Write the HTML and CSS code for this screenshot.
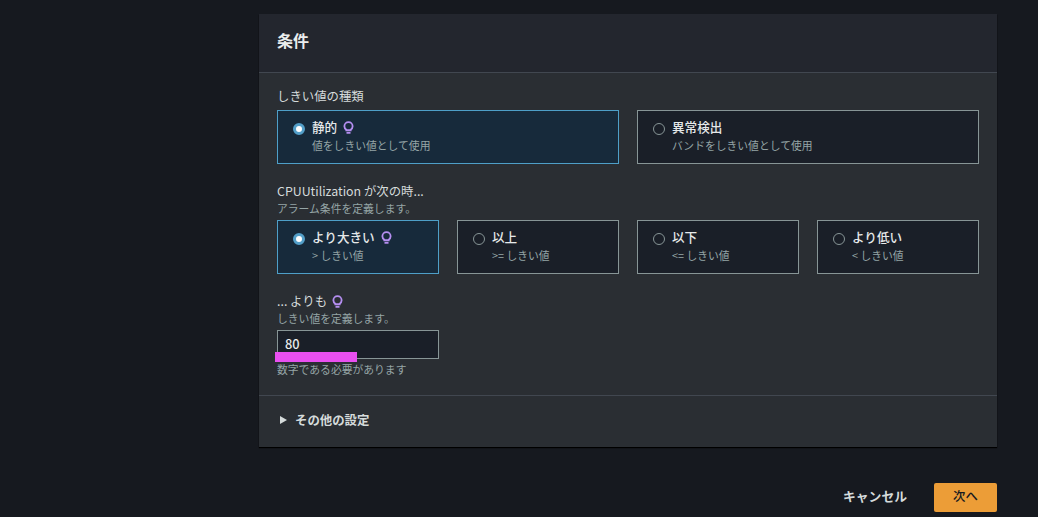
FILE: index.html
```html
<!DOCTYPE html>
<html lang="ja">
<head>
<meta charset="utf-8">
<title>条件</title>
<link rel="stylesheet" href="styles.css">
</head>
<body>
<main class="page">
  <section class="panel">
    <header class="panel-head"><h2>条件</h2></header>
    <div class="panel-body">
      <div class="field">
        <div class="label">しきい値の種類</div>
        <div class="tiles two">
          <div class="tile on"><span class="radio"></span><div class="tile-text"><div class="tile-title">静的 <svg class="bulb" viewBox="0 0 12 14"><path d="M3.6 9.4C2.3 8.5 1.5 7.2 1.5 5.7a4.5 4.5 0 0 1 9 0c0 1.500-.8 2.800-2.100 3.700v.6H3.600z" fill="none" stroke="currentColor" stroke-width="2"/><path d="M3.800 12.800h4.400" stroke="currentColor" stroke-width="2"/></svg></div><div class="tile-sub">値をしきい値として使用</div></div></div>
          <div class="tile"><span class="radio"></span><div class="tile-text"><div class="tile-title">異常検出</div><div class="tile-sub">バンドをしきい値として使用</div></div></div>
        </div>
      </div>
      <div class="field">
        <div class="label">CPUUtilization が次の時...</div>
        <div class="hint">アラーム条件を定義します。</div>
        <div class="tiles four">
          <div class="tile on"><span class="radio"></span><div class="tile-text"><div class="tile-title">より大きい <svg class="bulb" viewBox="0 0 12 14"><path d="M3.6 9.4C2.3 8.5 1.5 7.2 1.5 5.7a4.5 4.5 0 0 1 9 0c0 1.500-.8 2.800-2.100 3.700v.6H3.600z" fill="none" stroke="currentColor" stroke-width="2"/><path d="M3.800 12.800h4.400" stroke="currentColor" stroke-width="2"/></svg></div><div class="tile-sub">&gt; しきい値</div></div></div>
          <div class="tile"><span class="radio"></span><div class="tile-text"><div class="tile-title">以上</div><div class="tile-sub">&gt;= しきい値</div></div></div>
          <div class="tile"><span class="radio"></span><div class="tile-text"><div class="tile-title">以下</div><div class="tile-sub">&lt;= しきい値</div></div></div>
          <div class="tile"><span class="radio"></span><div class="tile-text"><div class="tile-title">より低い</div><div class="tile-sub">&lt; しきい値</div></div></div>
        </div>
      </div>
      <div class="field">
        <div class="label">... よりも <svg class="bulb" viewBox="0 0 12 14"><path d="M3.6 9.4C2.3 8.5 1.5 7.2 1.5 5.7a4.5 4.5 0 0 1 9 0c0 1.500-.8 2.800-2.100 3.700v.6H3.600z" fill="none" stroke="currentColor" stroke-width="2"/><path d="M3.800 12.800h4.400" stroke="currentColor" stroke-width="2"/></svg></div>
        <div class="hint">しきい値を定義します。</div>
        <div class="input-wrap">
          <div class="input">80</div>
          <span class="redact"></span>
        </div>
        <div class="constraint">数字である必要があります</div>
      </div>
    </div>
    <div class="extra"><span class="caret"></span>その他の設定</div>
  </section>
  <div class="actions">
    <span class="cancel">キャンセル</span>
    <span class="next">次へ</span>
  </div>
</main>
</body>
</html>
```
FILE: styles.css
```css
* { box-sizing: border-box; }
html, body { margin: 0; height: 100%; }
body {
  background: #16191f;
  color: #d5dbdb;
  font-family: "Noto Sans CJK JP", "Noto Sans", sans-serif;
  overflow: hidden;
}
.page { padding: 14px 41px 0 259px; }
.panel {
  background: #2a2e33;
  box-shadow: 0 1px 1px #000;
}
.panel-head {
  height: 59px;
  background: #23262e;
  border-bottom: 1px solid #414750;
  padding: 0 18px 7px;
  display: flex;
  align-items: center;
}
.panel-head h2 { margin: 0; font-size: 16px; font-weight: 700; line-height: 24px; color: #eaeded; }
.panel-body {
  padding: 14px 18px 0;
  height: 323px;
  border-bottom: 1px solid #414750;
}
.field { margin-bottom: 18px; }
.label { font-size: 12.4px; line-height: 19px; color: #d5dbdb; display: flex; align-items: center; gap: 5px; }
.hint { font-size: 10.800px; line-height: 14px; color: #95a5a6; }
.tiles { display: grid; }
.two { grid-template-columns: 342px 342px; column-gap: 18px; margin-top: 4px; }
.four { grid-template-columns: repeat(4, 162px); column-gap: 18px; margin-top: 5px; }
.tile {
  height: 54px;
  border: 1px solid #879596;
  background: #1a1f28;
  padding: 7px 15px;
  display: flex;
  gap: 7px;
}
.tile.on { background: #172a3b; border-color: #4e9fc8; }
.radio {
  width: 12px; height: 12px; margin-top: 5px; flex: none;
  border: 1px solid #879596;
  border-radius: 50%;
}
.on .radio {
  border: 3.500px solid #539fc9;
  background: #fff;
}
.tile-text { min-width: 0; }
.tile-title { font-size: 12.600px; line-height: 18px; font-weight: 500; color: #e6e9ea; display: flex; align-items: center; gap: 6px; }
.tile-sub { font-size: 10.800px; line-height: 16px; margin-top: 1px; color: #95a5a6; }
.bulb { width: 11px; height: 13px; color: #b48ef0; flex: none; }
.input-wrap { position: relative; margin-top: 5px; width: 162px; }
.input {
  height: 29px;
  border: 1px solid #879596;
  background: #1a1f28;
  font-size: 12.800px;
  font-weight: 500;
  line-height: 26px;
  padding-left: 7px;
  color: #eaeded;
}
.redact {
  position: absolute;
  left: -2px; top: 22px;
  width: 82px; height: 10px;
  background: #e94ff0;
}
.constraint { font-size: 10.800px; line-height: 14px; margin-top: 3px; color: #95a5a6; }
.extra {
  height: 51px;
  padding-left: 21px;
  display: flex;
  align-items: center;
  font-size: 12.400px;
  font-weight: 700;
  color: #d5dbdb;
  padding-bottom: 4px;
}
.caret {
  width: 0; height: 0;
  border-left: 7px solid #d5dbdb;
  border-top: 4.500px solid transparent;
  border-bottom: 4.500px solid transparent;
  margin-right: 8px;
}
.actions {
  display: flex;
  justify-content: flex-end;
  align-items: center;
  gap: 27px;
  margin-top: 36px;
}
.cancel { font-size: 12.800px; font-weight: 700; color: #d5dbdb; padding-bottom: 5px; }
.next {
  width: 63px; height: 29px;
  background: #ec9d37;
  border-radius: 2px;
  color: #16191f;
  font-size: 12.400px;
  font-weight: 500;
  padding-bottom: 3px;
  display: flex; align-items: center; justify-content: center;
}
```
